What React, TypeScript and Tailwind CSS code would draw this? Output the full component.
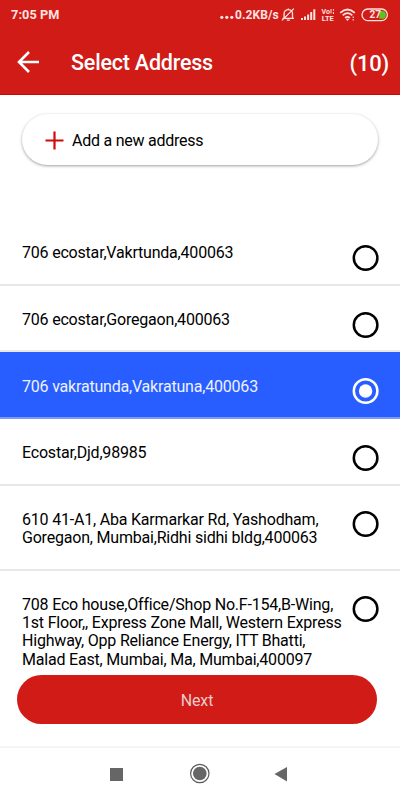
import React from "react";

type Address = { lines: string[]; size: string; selected?: boolean };

const addresses: Address[] = [
  { lines: ["706 ecostar,Vakrtunda,400063"], size: "h-[66.6px]" },
  { lines: ["706 ecostar,Goregaon,400063"], size: "h-[66.6px]" },
  { lines: ["706 vakratunda,Vakratuna,400063"], size: "h-[66.6px]", selected: true },
  { lines: ["Ecostar,Djd,98985"], size: "h-[66.6px]" },
  {
    lines: ["610 41-A1, Aba Karmarkar Rd, Yashodham,", "Goregaon, Mumbai,Ridhi sidhi bldg,400063"],
    size: "h-[85px]",
  },
  {
    lines: [
      "708 Eco house,Office/Shop No.F-154,B-Wing,",
      "1st Floor,, Express Zone Mall, Western Express",
      "Highway, Opp Reliance Energy, ITT Bhatti,",
      "Malad East, Mumbai, Ma, Mumbai,400097",
    ],
    size: "h-[120px]",
  },
];

function Radio({ selected }: { selected?: boolean }) {
  return (
    <svg className="mt-[24.9px] h-7 w-7 shrink-0" viewBox="0 0 28 28" fill="none">
      <circle cx="13.6" cy="14" r="11.8" stroke={selected ? "#fff" : "#000"} strokeWidth="2.5" />
      {selected && <circle cx="13.6" cy="14" r="6.7" fill="#fff" />}
    </svg>
  );
}

function StatusBar() {
  return (
    <div className="flex h-[30px] items-center pl-[11px] text-[#ffe3e1]">
      <span className="w-[209px] text-[12.7px] font-bold tracking-[0.1px]">7:05 PM</span>
      <svg width="15" height="14" viewBox="0 0 15 14" fill="currentColor">
        <circle cx="1.8" cy="9.3" r="1.6" />
        <circle cx="6.8" cy="9.3" r="1.6" />
        <circle cx="11.8" cy="9.3" r="1.6" />
      </svg>
      <span className="w-[46px] whitespace-nowrap text-[12px] font-bold tracking-[0.1px]">0.2KB/s</span>
      <svg width="15" height="14" viewBox="0 0 15 14" fill="none" stroke="currentColor" strokeWidth="1.3">
        <path d="M1.5 10.3h11.5M3.1 10V5.8a4.2 4.2 0 0 1 8.4 0V10M5.8 12.1h3M7.3 1.7V.5M12.8.6 1 12.4" />
      </svg>
      <svg className="ml-[4px]" width="17" height="14" viewBox="0 0 17 14" fill="currentColor">
        <path d="M1 10h2v2H1zM4 8.6h2V12H4zM7.1 6.4h2V12h-2zM10.2 3.9h2V12h-2zM13.3 1.2h2V12h-2z" />
      </svg>
      <svg className="ml-[4px]" width="14" height="14" viewBox="0 0 14 14" fill="currentColor">
        <text x="0.5" y="6.3" textLength="8.4" lengthAdjust="spacingAndGlyphs" className="font-[Roboto] text-[7.5px] font-bold">Vo</text>
        <path d="M10 1v4.5M12.4 1v1.8M12.4 4v2" fill="none" stroke="currentColor" strokeWidth="1" />
        <text x="0.7" y="13" textLength="12" lengthAdjust="spacingAndGlyphs" className="font-[Roboto] text-[7.5px] font-bold">LTE</text>
      </svg>
      <svg className="ml-[4px]" width="18" height="14" viewBox="0 0 18 14" fill="none" stroke="currentColor" strokeWidth="1.7">
        <path d="M1.2 4.8q7.3-6.6 14.6 0M3.7 7.3q4.8-4.4 9.6 0M6.1 9.8q2.4-2 4.8 0" />
        <path d="m6.7 10.8 1.8 2.1 1.8-2.1z" fill="currentColor" stroke="none" />
        <path d="M14.2 8.5V13" strokeWidth="1.1" strokeDasharray="1.6 .8" />
      </svg>
      <svg className="ml-[4px]" width="28" height="14" viewBox="0 0 28 14">
        <path d="M18.4 3H21a3.9 3.9 0 0 1 0 7.8h-2.6z" fill="#57c51c" />
        <rect x="1" y="1" width="25.4" height="11.6" rx="5.8" fill="none" stroke="currentColor" strokeWidth="1.3" />
        <text x="8.6" y="10.4" className="font-[Roboto] text-[10px] font-bold" fill="currentColor">27</text>
      </svg>
    </div>
  );
}

export default function App() {
  return (
    <div className="flex h-[800px] w-[400px] flex-col overflow-hidden bg-white font-[Roboto,sans-serif] text-black">
      <header className="h-[95px] shrink-0 border-b border-[#c90808] bg-[#d11b17]">
        <StatusBar />
        <div className="flex h-[65px] items-center pl-[17px] pr-[11px] text-white">
          <svg className="mb-[1px]" width="23" height="22" viewBox="0 0 23 22" fill="none" stroke="currentColor" strokeWidth="2.6">
            <path d="M22 11H2M12 1 2 11l10 10" />
          </svg>
          <h1 className="ml-[31px] mt-[2px] text-[21.5px] font-medium tracking-[-0.2px]">Select Address</h1>
          <span className="ml-auto mt-[2px] text-[22px] font-medium tracking-[-0.2px]">(10)</span>
        </div>
      </header>

      <main className="h-[580px] shrink-0 overflow-hidden pt-[19px]">
        <button className="mx-[22px] flex h-[51px] w-[356px] items-center rounded-full bg-white pl-[23px] shadow-[0_1px_3px_rgba(0,0,0,0.38)]">
          <svg className="mt-px" width="19" height="19" viewBox="0 0 19 19" stroke="#cf0b0b" strokeWidth="2.2">
            <path d="M9.5.5v18M.5 9.5h18" />
          </svg>
          <span className="ml-[8px] mt-[2px] text-[16px] tracking-[-0.24px]">Add a new address</span>
        </button>

        <ul className="mt-[54.2px]">
          {addresses.map((a) => (
            <li
              key={a.lines[0]}
              className={`${a.size} flex justify-between border-b-2 pl-[22px] pr-[20px] ${
                a.selected ? "border-[#7c9bf5] bg-[#285eff] text-[#eef2ff]" : "border-[#e8e8e8]"
              }`}
            >
              <p className="pt-[25.2px] text-[16px] leading-[18.3px] tracking-[-0.2px]">
                {a.lines.map((l) => (
                  <span key={l} className="block whitespace-nowrap">{l}</span>
                ))}
              </p>
              <Radio selected={a.selected} />
            </li>
          ))}
        </ul>
      </main>

      <button className="ml-[17px] h-[49px] w-[360px] shrink-0 rounded-full bg-[#d11b17] pt-[2px] text-[16px] tracking-[-0.1px] text-[#edcccb]">
        Next
      </button>

      <nav className="mt-[22px] flex h-[54px] items-center border-t-2 border-[#f5f5f5] pl-[110px]">
        <span className="h-[13px] w-[13px] bg-[#666]" />
        <svg className="ml-[66px]" width="22" height="22" viewBox="0 0 22 22">
          <circle cx="10.8" cy="10.5" r="9.2" fill="none" stroke="#5c5c5c" strokeWidth="1.2" />
          <circle cx="10.8" cy="10.5" r="6.8" fill="#666" />
        </svg>
        <svg className="ml-[63px]" width="13" height="15" viewBox="0 0 13 15">
          <path d="M.5 7 13 0v14.5z" fill="#666" />
        </svg>
      </nav>
    </div>
  );
}
